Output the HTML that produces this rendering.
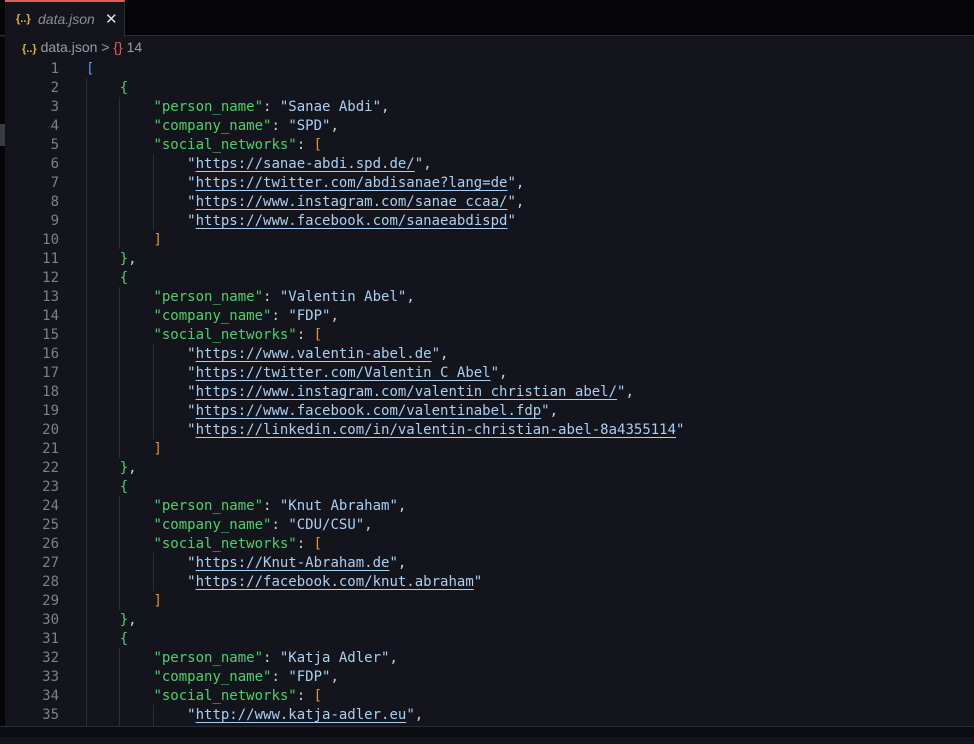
<!DOCTYPE html>
<html><head><meta charset="utf-8"><style>
*{margin:0;padding:0;box-sizing:border-box}
body{width:974px;height:737px;background:#14151c;overflow:hidden;position:relative;font-family:"DejaVu Sans Mono","Liberation Mono",monospace}
.top{position:absolute;left:0;top:0;width:974px;height:36px;background:#050507;border-bottom:1px solid #2a2b33}
.tab{position:absolute;left:5px;top:0;width:120px;height:37px;background:#14151c;border-top:2px solid #e0605a;border-right:1px solid #2a2b33;font-family:"Liberation Sans",sans-serif;font-size:14px}
.tab .ic{position:absolute;left:11px;top:11px;color:#e2b340;font-size:11px;font-weight:bold}
.tab .nm{position:absolute;left:33px;top:9px;color:#8b8d96;font-style:italic}
.tab .x{position:absolute;left:100px;top:8px;color:#ddd;font-size:15px}
.crumb{position:absolute;left:22px;top:39px;font-family:"Liberation Sans",sans-serif;font-size:14px;color:#9a9ca4}
.crumb .y{color:#e2b340;font-size:11px;font-weight:bold}
.crumb .r{color:#e0605a}
.lstrip{position:absolute;left:0;top:37px;width:5px;height:700px;background:#050507}
.lbar{position:absolute;left:0;top:124px;width:5px;height:22px;background:#3a3b42}
.bot{position:absolute;left:0;top:726px;width:974px;height:11px;background:#0c0d12;border-top:1px solid #2a2b33}
.code{position:absolute;left:0;top:60px;font-size:14px;line-height:19px;white-space:pre}
.ln{display:inline-block;width:59px;text-align:right;color:#7d808a}
.t{position:absolute;left:86px;top:0;color:#d0d0d0}
.k{color:#4fcf6a}.s{color:#a9cff2}.u{color:#a9cff2;text-decoration:underline;text-decoration-color:#a9cff2;text-underline-offset:3px}
.b1{color:#4a9ef0}.b2{color:#4fcf6a}.b3{color:#e6952e}
.g{position:absolute;width:1px;background:#2c2d35}
</style></head><body>
<div class="top"></div>
<div class="tab"><span class="ic">{..}</span><span class="nm">data.json</span><span class="x">✕</span></div>
<div class="crumb"><span class="y">{..}</span> data.json &gt; <span class="r">{}</span> 14</div>
<div class="lstrip"></div><div class="lbar"></div>
<div class="g" style="left:86px;top:78px;height:648px"></div>
<div class="g" style="left:119px;top:97px;height:152px"></div>
<div class="g" style="left:119px;top:287px;height:171px"></div>
<div class="g" style="left:119px;top:496px;height:114px"></div>
<div class="g" style="left:119px;top:648px;height:78px"></div>
<div class="g" style="left:153px;top:154px;height:76px"></div>
<div class="g" style="left:153px;top:344px;height:95px"></div>
<div class="g" style="left:153px;top:553px;height:38px"></div>
<div class="g" style="left:153px;top:705px;height:21px"></div>
<div class="code"><div style="position:relative"><div><span class="ln">1</span></div><div><span class="ln">2</span></div><div><span class="ln">3</span></div><div><span class="ln">4</span></div><div><span class="ln">5</span></div><div><span class="ln">6</span></div><div><span class="ln">7</span></div><div><span class="ln">8</span></div><div><span class="ln">9</span></div><div><span class="ln">10</span></div><div><span class="ln">11</span></div><div><span class="ln">12</span></div><div><span class="ln">13</span></div><div><span class="ln">14</span></div><div><span class="ln">15</span></div><div><span class="ln">16</span></div><div><span class="ln">17</span></div><div><span class="ln">18</span></div><div><span class="ln">19</span></div><div><span class="ln">20</span></div><div><span class="ln">21</span></div><div><span class="ln">22</span></div><div><span class="ln">23</span></div><div><span class="ln">24</span></div><div><span class="ln">25</span></div><div><span class="ln">26</span></div><div><span class="ln">27</span></div><div><span class="ln">28</span></div><div><span class="ln">29</span></div><div><span class="ln">30</span></div><div><span class="ln">31</span></div><div><span class="ln">32</span></div><div><span class="ln">33</span></div><div><span class="ln">34</span></div><div><span class="ln">35</span></div>
<div class="t"><span class="b1">[</span>
    <span class="b2">{</span>
        <span class="k">"person_name"</span>: <span class="s">"Sanae Abdi"</span>,
        <span class="k">"company_name"</span>: <span class="s">"SPD"</span>,
        <span class="k">"social_networks"</span>: <span class="b3">[</span>
            <span class="s">"<span class="u">https://sanae-abdi.spd.de/</span>"</span>,
            <span class="s">"<span class="u">https://twitter.com/abdisanae?lang=de</span>"</span>,
            <span class="s">"<span class="u">https://www.instagram.com/sanae_ccaa/</span>"</span>,
            <span class="s">"<span class="u">https://www.facebook.com/sanaeabdispd</span>"</span>
        <span class="b3">]</span>
    <span class="b2">}</span>,
    <span class="b2">{</span>
        <span class="k">"person_name"</span>: <span class="s">"Valentin Abel"</span>,
        <span class="k">"company_name"</span>: <span class="s">"FDP"</span>,
        <span class="k">"social_networks"</span>: <span class="b3">[</span>
            <span class="s">"<span class="u">https://www.valentin-abel.de</span>"</span>,
            <span class="s">"<span class="u">https://twitter.com/Valentin_C_Abel</span>"</span>,
            <span class="s">"<span class="u">https://www.instagram.com/valentin_christian_abel/</span>"</span>,
            <span class="s">"<span class="u">https://www.facebook.com/valentinabel.fdp</span>"</span>,
            <span class="s">"<span class="u">https://linkedin.com/in/valentin-christian-abel-8a4355114</span>"</span>
        <span class="b3">]</span>
    <span class="b2">}</span>,
    <span class="b2">{</span>
        <span class="k">"person_name"</span>: <span class="s">"Knut Abraham"</span>,
        <span class="k">"company_name"</span>: <span class="s">"CDU/CSU"</span>,
        <span class="k">"social_networks"</span>: <span class="b3">[</span>
            <span class="s">"<span class="u">https://Knut-Abraham.de</span>"</span>,
            <span class="s">"<span class="u">https://facebook.com/knut.abraham</span>"</span>
        <span class="b3">]</span>
    <span class="b2">}</span>,
    <span class="b2">{</span>
        <span class="k">"person_name"</span>: <span class="s">"Katja Adler"</span>,
        <span class="k">"company_name"</span>: <span class="s">"FDP"</span>,
        <span class="k">"social_networks"</span>: <span class="b3">[</span>
            <span class="s">"<span class="u">http://www.katja-adler.eu</span>"</span>,</div></div></div>
<div class="bot"></div>
</body></html>
